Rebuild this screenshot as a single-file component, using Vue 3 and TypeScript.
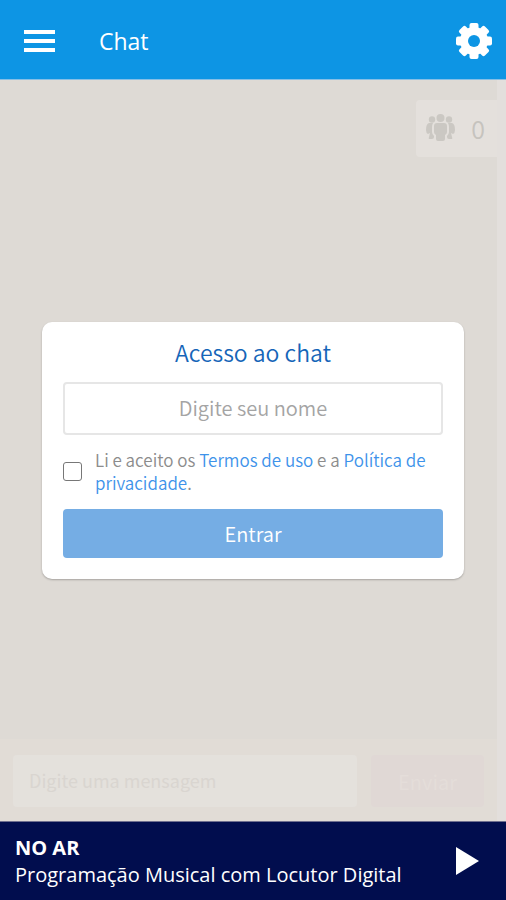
<script setup lang="ts">
import { ref } from 'vue'

const name = ref('')
const accepted = ref(false)
const message = ref('')
const online = ref(0)
const programme = ref('Programação Musical com Locutor Digital')
</script>

<template>
  <div class="app">
    <header class="topbar">
      <button class="icon-button" type="button" aria-label="Menu">
        <svg width="31" height="22" viewBox="0 0 31 22" fill="#fff">
          <path d="M0 0h31v4H0zM0 9h31v4H0zM0 18h31v4H0z" />
        </svg>
      </button>
      <h1 class="title">Chat</h1>
      <button class="icon-button" type="button" aria-label="Configurações">
        <svg width="36" height="36" viewBox="0 0 36 36">
          <g fill="#fff">
            <rect x="13.5" y="0" width="9" height="36" rx="2" />
            <rect x="13.5" y="0" width="9" height="36" rx="2" transform="rotate(45 18 18)" />
            <rect x="13.5" y="0" width="9" height="36" rx="2" transform="rotate(90 18 18)" />
            <rect x="13.5" y="0" width="9" height="36" rx="2" transform="rotate(135 18 18)" />
            <circle cx="18" cy="18" r="14" />
          </g>
          <circle cx="18" cy="18" r="6" fill="#0d95e4" />
        </svg>
      </button>
    </header>

    <main class="room">
      <div class="log">
        <div class="online">
          <svg width="29" height="28" viewBox="0 0 29 28" fill="#cbc8c3">
            <circle cx="14.500" cy="4" r="4" />
            <circle cx="6" cy="5.500" r="3.200" />
            <circle cx="23" cy="5.500" r="3.200" />
            <path d="M11 9h7q3 0 3 3v6q0 2-2 3v4q0 2-2 2h-5q-2 0-2-2v-4q-2-1-2-3v-6q0-3 3-3z" />
            <path d="M3 9h4q-1 2-1 4v5q0 2 2 4v1q0 2-2 2H4q-2 0-1-2l1-4-2 1q-2-1-2-4 0-6 3-7z" />
            <path d="M26 9h-4q1 2 1 4v5q0 2-2 4v1q0 2 2 2h2q2 0 1-2l-1-4 2 1q2-1 2-4 0-6-3-7z" />
          </svg>
          <span>{{ online }}</span>
        </div>
      </div>
      <form class="composer" @submit.prevent>
        <input v-model="message" type="text" placeholder="Digite uma mensagem" aria-label="Digite uma mensagem" disabled />
        <button type="submit" disabled>Enviar</button>
      </form>

      <div class="overlay">
        <form class="card" @submit.prevent>
          <h2>Acesso ao chat</h2>
          <input v-model="name" class="name" type="text" placeholder="Digite seu nome" aria-label="Digite seu nome" />
          <div class="terms">
            <input id="accept" v-model="accepted" type="checkbox" />
            <label for="accept">Li e aceito os <a href="#termos">Termos de uso</a> e a <a href="#privacidade">Política de privacidade</a>.</label>
          </div>
          <button class="enter" type="submit">Entrar</button>
        </form>
      </div>
    </main>

    <footer class="player">
      <div class="now">
        <strong>NO AR</strong>
        <span>{{ programme }}</span>
      </div>
      <button class="icon-button" type="button" aria-label="Tocar">
        <svg width="23" height="28" viewBox="0 0 23 28" fill="#fff"><path d="M0 0l23 14L0 28z" /></svg>
      </button>
    </footer>
  </div>
</template>

<style>
body {
  margin: 0;
}
</style>

<style scoped>
.app {
  display: flex;
  flex-direction: column;
  min-height: 100vh;
  font-family: "Noto Sans CJK JP", "Noto Sans", sans-serif;
  background: #dedad5;
}
.app * {
  box-sizing: border-box;
}
input,
button {
  font-family: inherit;
  margin: 0;
}
.topbar {
  display: flex;
  align-items: center;
  height: 80px;
  padding: 2px 14px 0 24px;
  background: #0d95e4;
  border-bottom: 1px solid #86bfe6;
  color: #fff;
}
.icon-button {
  display: flex;
  padding: 0;
  border: 0;
  background: none;
  cursor: pointer;
}
.title {
  flex: 1;
  margin: 0 0 0 44px;
  font: 400 23px/30px "Open Sans", sans-serif;
}
.room {
  position: relative;
  flex: 1;
  display: flex;
  flex-direction: column;
  border-right: 9px solid #e3dfdc;
}
.log {
  flex: 1;
  display: flex;
  justify-content: flex-end;
  align-items: flex-start;
  padding-top: 20px;
}
.online {
  display: flex;
  align-items: center;
  gap: 16px;
  height: 57px;
  padding: 0 12px 2px 10px;
  border-radius: 4px 0 0 4px;
  background: #e4e0dc;
  color: #c6c3be;
  font-size: 25px;
  font-weight: 350;
}
.composer {
  display: flex;
  gap: 14px;
  padding: 16px 13px 14px;
  background: #e1dcd6;
}
.composer input {
  flex: 1;
  min-width: 0;
  height: 52px;
  padding: 0 14px 3px 16px;
  border: 0;
  border-radius: 4px;
  background: #e4e1dc;
  font-size: 18px;
}
.composer input::placeholder {
  color: #d9d5d0;
  opacity: 1;
}
.composer button {
  width: 113px;
  border: 0;
  border-radius: 4px;
  background: #e0d8d5;
  color: #e4ddd9;
  font-size: 20px;
}
.overlay {
  position: absolute;
  inset: 0 -9px 0 0;
  display: flex;
  align-items: center;
  justify-content: center;
  padding: 0 42px;
}
.card {
  flex: 1;
  display: flex;
  flex-direction: column;
  padding: 13px 21px 21px;
  border-radius: 10px;
  background: #fff;
  box-shadow: 0 1px 2px rgba(0, 0, 0, 0.25);
  font-weight: 350;
}
.card h2 {
  margin: 0 0 13px;
  font-size: 23px;
  font-weight: 350;
  line-height: 34px;
  text-align: center;
  color: #1565b8;
}
.name {
  height: 53px;
  padding: 0 12px 2px;
  border: 2px solid #e6e6e6;
  border-radius: 4px;
  background: #fff;
  font-size: 20px;
  font-weight: inherit;
  text-align: center;
  color: #555;
}
.name::placeholder {
  color: #a4a4a4;
  opacity: 1;
}
.terms {
  display: flex;
  align-items: center;
  gap: 13px;
  margin: 13px 0 15px;
}
.terms input {
  flex: none;
  width: 19px;
  height: 19px;
  border: 1px solid #777;
  border-radius: 3px;
  background: #fff;
  appearance: none;
}
.terms input:checked {
  background: #2d87e2;
}
.terms label {
  font-size: 17px;
  line-height: 23px;
  color: #8c8c8c;
}
.terms a {
  color: #3e93ea;
  text-decoration: none;
}
.enter {
  height: 49px;
  border: 0;
  border-radius: 4px;
  background: #75ade4;
  color: #fff;
  font-size: 20px;
  font-weight: inherit;
  cursor: pointer;
}
.player {
  display: flex;
  align-items: center;
  justify-content: space-between;
  height: 79px;
  padding: 0 27px 0 15px;
  border-top: 1px solid #70708f;
  background: #010d4e;
  color: #fff;
  font: 20px/27px "Open Sans", sans-serif;
}
.now {
  display: flex;
  flex-direction: column;
}
</style>
